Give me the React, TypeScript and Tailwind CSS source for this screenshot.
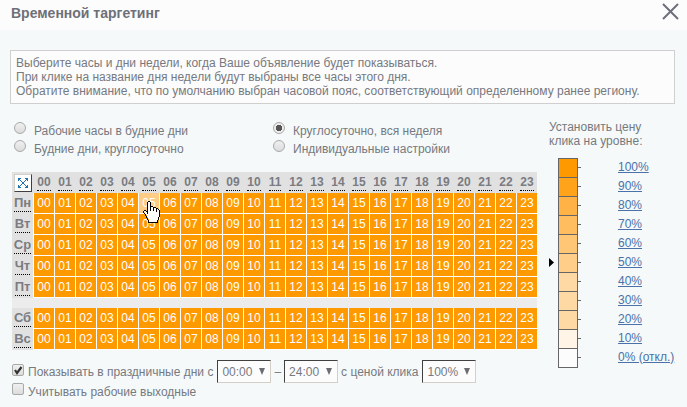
import { useState } from "react";

const hours = Array.from({ length: 24 }, (_, i) => String(i).padStart(2, "0"));
const workdays = ["Пн", "Вт", "Ср", "Чт", "Пт"];
const weekend = ["Сб", "Вс"];

const levels = [
  { label: "100%", color: "bg-[#ff9900]" },
  { label: "90%", color: "bg-[#ffa31a]" },
  { label: "80%", color: "bg-[#ffb347]" },
  { label: "70%", color: "bg-[#ffbd60]" },
  { label: "60%", color: "bg-[#ffc675]" },
  { label: "50%", color: "bg-[#ffcf8a]" },
  { label: "40%", color: "bg-[#ffd9a3]" },
  { label: "30%", color: "bg-[#ffd9a3]" },
  { label: "20%", color: "bg-[#ffd9a3]" },
  { label: "10%", color: "bg-[#fff4e6]" },
  { label: "0% (откл.)", color: "bg-[#fcfcfc]" },
];

const modes = [
  "Рабочие часы в будние дни",
  "Круглосуточно, вся неделя",
  "Будние дни, круглосуточно",
  "Индивидуальные настройки",
];

function HandCursor() {
  return (
    <svg
      className="pointer-events-none absolute left-1 top-2 z-10"
      width="17"
      height="22"
      viewBox="0 0 17 22"
      shapeRendering="crispEdges"
      aria-hidden="true"
    >
      <path
        fill="#fff"
        d="M5 1h2v5h3v1h3v1h2v1h1v7h-1v3h-1v2H6v-3H5v-2H4v-2H3v-2H2v-1H1v-2h2v1h1v1h1z"
      />
      <path
        fill="#000"
        d="M5 0h2v1H5zM4 1h1v12H4zM7 1h1v9H7zM8 5h2v1H8zM10 6h1v4h-1zM11 6h2v1h-2zM13 7h1v4h-1zM14 7h1v1h-1zM15 8h1v1h-1zM16 9h1v7h-1zM1 9h2v1H1zM0 10h1v2H0zM3 10h1v1H3zM1 12h1v1H1zM2 13h1v2H2zM3 15h1v2H3zM4 17h1v2H4zM15 16h1v3h-1zM5 19h1v3H5zM14 19h1v3h-1zM6 21h8v1H6z"
      />
    </svg>
  );
}

function DayRow({ day }: { day: string }) {
  return (
    <tr className="h-[21px]">
      <th scope="row" className="bg-[#e1e1e1] p-0 text-[13px] font-bold text-[#7a7c82]">
        <button type="button" className="mx-auto block h-4 border-b border-dotted border-black leading-[14px]">
          {day}
        </button>
      </th>
      {hours.map((h) => {
        const hovered = day === "Пн" && h === "05";
        return (
          <td
            key={h}
            className={`relative border-b border-l border-white p-0 text-center text-white ${
              hovered ? "bg-[#ffcc85]" : "bg-[#ff9900]"
            }`}
          >
            {h}
            {hovered && <HandCursor />}
          </td>
        );
      })}
    </tr>
  );
}

function Picker({ label, options }: { label: string; options: string[] }) {
  return (
    <span className="relative inline-flex">
      <select
        aria-label={label}
        className="h-[23px] w-[54px] appearance-none border border-t-[#404040] border-r-[#d4d0c8] border-b-[#d4d0c8] border-l-[#404040] bg-[#fcfcfc] pl-1 leading-4"
      >
        {options.map((o) => (
          <option key={o}>{o}</option>
        ))}
      </select>
      <svg className="pointer-events-none absolute right-1.5 top-2" width="6" height="7" viewBox="0 0 6 7" aria-hidden="true">
        <path d="M0 0h6L3 7z" fill="#6b6d72" />
      </svg>
    </span>
  );
}

const tick =
  "size-3 shrink-0 appearance-none border border-[#a9a9a9] bg-linear-to-b from-[#f0f0f0] to-[#dcdcdc]";

export default function App() {
  const [mode, setMode] = useState(modes[1]);
  const [holidays, setHolidays] = useState(true);

  return (
    <main className="min-h-screen bg-[#f5f9fa] font-['Liberation_Sans',Arial,sans-serif] text-[12px] leading-[14px] text-[#777980]">
      <header className="flex h-[30px] items-center justify-between bg-[#fcfcfc] pl-[11px] pr-2">
        <h1 className="pb-1 text-[14px] font-bold leading-4 text-[#6d7078]">Временной таргетинг</h1>
        <button type="button" aria-label="Закрыть" className="pb-2">
          <svg width="17" height="17" viewBox="0 0 17 17" aria-hidden="true">
            <path d="M1 1l15 15M16 1L1 16" stroke="#6d6f7c" strokeWidth="2" />
          </svg>
        </button>
      </header>

      <p className="ml-2.5 mr-3 mt-5 border border-[#cfcfcf] bg-[#fcfcfc] px-[5px] py-[5px]">
        Выберите часы и дни недели, когда Ваше объявление будет показываться.
        <br />
        При клике на название дня недели будут выбраны все часы этого дня.
        <br />
        Обратите внимание, что по умолчанию выбран часовой пояс, соответствующий определенному ранее региону.
      </p>

      <div className="flex gap-3 pl-3 pt-4">
        <section className="w-[525px] shrink-0">
          <fieldset className="grid grid-cols-[259px_1fr] pl-0.5 pt-0.5">
            {modes.map((m) => (
              <label key={m} className="flex h-[18px] items-start gap-2">
                <input
                  type="radio"
                  name="mode"
                  checked={mode === m}
                  onChange={() => setMode(m)}
                  className={`${tick} rounded-full checked:bg-[radial-gradient(circle,#555_0_3px,#eee_3.5px)]`}
                />
                <span className="pt-0.5">{m}</span>
              </label>
            ))}
          </fieldset>

          <table className="mt-3.5 w-full table-fixed border-separate border-spacing-0">
            <thead>
              <tr className="h-[21px] bg-[#e1e1e1]">
                <th className="p-0">
                  <button
                    type="button"
                    aria-label="Сбросить"
                    className="ml-0.5 flex h-[18px] w-[18px] items-center justify-center border border-t-[#d4d0c8] border-l-[#d4d0c8] border-r-[#404040] border-b-[#404040] bg-white"
                  >
                    <svg width="12" height="12" viewBox="0 0 12 12" fill="#1f72ad" shapeRendering="crispEdges" aria-hidden="true">
                      <path d="M1 1h3v1H1zM8 1h3v1H8zM2 2h1v1H2zM9 2h1v1H9zM3 3h1v1H3zM8 3h1v1H8zM4 4h1v1H4zM7 4h1v1H7zM5 5h2v2H5zM4 7h1v1H4zM7 7h1v1H7zM3 8h1v1H3zM8 8h1v1H8zM2 9h1v1H2zM9 9h1v1H9zM1 10h3v1H1zM8 10h3v1H8zM1 2h1v2H1zM10 2h1v2h-1zM1 8h1v2H1zM10 8h1v2h-1z" />
                    </svg>
                  </button>
                </th>
                {hours.map((h) => (
                  <th key={h} scope="col" className="p-0 pl-px font-bold text-[#7a7c82]">
                    <button type="button" className="mx-auto block h-4 border-b border-dotted border-black leading-[14px]">
                      {h}
                    </button>
                  </th>
                ))}
              </tr>
            </thead>
            <tbody>
              {workdays.map((d) => (
                <DayRow key={d} day={d} />
              ))}
              <tr className="h-2.5 bg-[#ececec]">
                <td colSpan={25} className="p-0" />
              </tr>
              {weekend.map((d) => (
                <DayRow key={d} day={d} />
              ))}
            </tbody>
          </table>

          <div className="mt-2.5 flex items-center">
            <label className="flex items-center gap-1">
              <span className="relative flex pb-1">
                <input
                  type="checkbox"
                  checked={holidays}
                  onChange={() => setHolidays(!holidays)}
                  className={`${tick} rounded-xs`}
                />
                {holidays && (
                  <svg className="pointer-events-none absolute left-0 top-0" width="12" height="12" viewBox="0 0 12 12" fill="none" aria-hidden="true">
                    <path d="M3 6l2 3 4.500-6" stroke="#333" strokeWidth="2.200" />
                  </svg>
                )}
              </span>
              Показывать в праздничные дни с
            </label>
            <span className="ml-1 flex items-center gap-[3px]">
              <Picker label="Начало" options={["00:00", "12:00"]} />
              –
              <Picker label="Конец" options={["24:00", "12:00"]} />
              <span className="mr-px">с ценой клика</span>
              <Picker label="Цена клика" options={["100%", "50%"]} />
            </span>
          </div>
          <label className="flex items-start gap-1">
            <input type="checkbox" className={`${tick} rounded-xs`} />
            <span className="pt-0.5">Учитывать рабочие выходные</span>
          </label>
        </section>

        <aside className="grow whitespace-nowrap">
          <h2>
            Установить цену
            <br />
            клика на уровне:
          </h2>
          <ul className="mt-2.5">
            {levels.map(({ label, color }) => (
              <li key={label} className="flex h-[19px] items-center">
                <span className="flex w-[9px] shrink-0">
                  {label === "50%" && (
                    <svg width="5" height="9" viewBox="0 0 5 9" aria-hidden="true">
                      <path d="M0 0l5 4.500-5 4.500z" fill="#000" />
                    </svg>
                  )}
                </span>
                <span className={`h-5 w-5 shrink-0 self-start border border-[#666] ${color}`} />
                <span className="mr-[37px] h-px w-[3px] shrink-0 bg-[#666]" />
                <a href="#" className="pb-0.5 text-[#4a72a8] underline">
                  {label}
                </a>
              </li>
            ))}
          </ul>
        </aside>
      </div>
    </main>
  );
}
